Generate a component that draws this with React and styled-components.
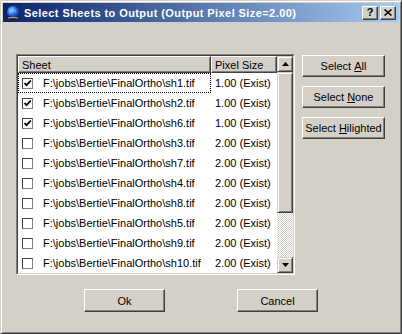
import React from 'react';
import styled, { createGlobalStyle } from 'styled-components';

const Global = createGlobalStyle`
  html, body { margin: 0; padding: 0; background: #D4D0C8; }
  body {
    width: 402px; height: 334px; overflow: hidden;
    font-family: "Liberation Sans", Arial, sans-serif;
    font-size: 11px; color: #000;
  }
`;

const Window = styled.div`
  box-sizing: border-box;
  width: 402px;
  height: 334px;
  background: #D4D0C8;
  border: 1px solid;
  border-color: #D4D0C8 #404040 #404040 #D4D0C8;
  box-shadow: inset 1px 1px #fff, inset -1px -1px #808080;
  padding: 2px;
  display: flex;
  flex-direction: column;
`;

const TitleBar = styled.div`
  height: 19px;
  flex: none;
  display: flex;
  align-items: center;
  background: linear-gradient(to right, #0A246A, #A6CAF0);
  padding: 0 3px 0 2px;
`;

const TitleIcon = styled.svg`
  width: 16px;
  height: 16px;
  flex: none;
  margin-right: 3px;
`;

const TitleText = styled.div`
  flex: 1;
  color: #fff;
  font-weight: bold;
  font-size: 11px;
  white-space: nowrap;
  letter-spacing: 0.42px;
`;

const CapButton = styled.div`
  box-sizing: border-box;
  width: 16px;
  height: 14px;
  margin-left: ${p => p.$gap || 0}px;
  background: #D4D0C8;
  border: 1px solid;
  border-color: #fff #404040 #404040 #fff;
  box-shadow: inset -1px -1px #808080;
  display: flex;
  align-items: center;
  justify-content: center;
  font-weight: bold;
  font-size: 11px;
  line-height: 1;
`;

const Body = styled.div`
  flex: 1;
  display: flex;
  flex-direction: column;
  padding: 32px 0 0 13px;
`;

const MainRow = styled.div`
  display: flex;
  align-items: flex-start;
  gap: 7px;
`;

const ListOuter = styled.div`
  width: 279px;
  height: 221px;
  box-sizing: border-box;
  border: 1px solid;
  border-color: #808080 #fff #fff #808080;
`;

const ListInner = styled.div`
  height: 100%;
  box-sizing: border-box;
  border: 1px solid;
  border-color: #404040 #D4D0C8 #D4D0C8 #404040;
  background: #fff;
  display: flex;
`;

const Table = styled.div`
  width: 259px;
  display: flex;
  flex-direction: column;
`;

const HeaderRow = styled.div`
  display: flex;
  height: 17px;
  flex: none;
`;

const HeaderCell = styled.div`
  box-sizing: border-box;
  width: ${p => p.$w}px;
  height: 17px;
  background: #D4D0C8;
  border: 1px solid;
  border-color: #fff #404040 #404040 #fff;
  box-shadow: inset -1px -1px #808080;
  padding-left: 3px;
  display: flex;
  align-items: center;
  white-space: nowrap;
`;

const Row = styled.div`
  display: flex;
  height: 20px;
  flex: none;
  background: #fff;
`;

const NameCell = styled.div`
  box-sizing: border-box;
  width: 193px;
  height: 20px;
  display: flex;
  align-items: center;
  padding-left: 4px;
  white-space: nowrap;
  overflow: hidden;
  outline: ${p => (p.$focus ? '1px dotted #000' : 'none')};
  outline-offset: -1px;
`;

const SizeCell = styled.div`
  box-sizing: border-box;
  width: 66px;
  height: 20px;
  display: flex;
  align-items: center;
  padding-left: 4px;
  white-space: nowrap;
`;

const CheckBox = styled.div`
  box-sizing: border-box;
  width: 11px;
  height: 11px;
  flex: none;
  margin-right: 10px;
  background: #fff;
  border: 1px solid;
  border-color: #404040 #808080 #808080 #404040;
  display: flex;
  align-items: center;
  justify-content: center;
`;

const Scrollbar = styled.div`
  width: 16px;
  display: flex;
  flex-direction: column;
`;

const ScrollButton = styled.div`
  box-sizing: border-box;
  width: 16px;
  height: ${p => p.$h}px;
  flex: none;
  background: #D4D0C8;
  border: 1px solid;
  border-color: #D4D0C8 #404040 #404040 #D4D0C8;
  box-shadow: inset 1px 1px #fff, inset -1px -1px #808080;
  display: flex;
  align-items: center;
  justify-content: center;
`;

const Track = styled.div`
  flex: 1;
  background: repeating-conic-gradient(#fff 0 25%, #D4D0C8 0 50%) 0 0 / 2px 2px;
`;

const SideButtons = styled.div`
  display: flex;
  flex-direction: column;
  gap: 9px;
  margin-top: 1px;
`;

const Button = styled.div`
  box-sizing: border-box;
  width: ${p => p.$w}px;
  height: ${p => p.$h}px;
  background: #D4D0C8;
  border: 1px solid;
  border-color: #fff #404040 #404040 #fff;
  box-shadow: inset -1px -1px #808080;
  display: flex;
  align-items: center;
  justify-content: center;
  white-space: nowrap;
  u { text-decoration: underline; text-underline-offset: 1px; }
`;

const BottomRow = styled.div`
  display: flex;
  justify-content: center;
  gap: 72px;
  margin-top: 14px;
  margin-left: -13px;
`;

const Arrow = ({ down }) => (
  <svg width="7" height="4" viewBox="0 0 7 4">
    {down ? <path d="M0 0H7L3.5 4Z" fill="#000" /> : <path d="M0 4H7L3.5 0Z" fill="#000" />}
  </svg>
);

const Check = () => (
  <svg width="9" height="9" viewBox="0 0 9 9">
    <path d="M1.5 4 L3.5 6.2 L7.8 1.5" fill="none" stroke="#000" strokeWidth="1.8" />
  </svg>
);

const rows = [
  ['sh1', '1.00', true],
  ['sh2', '1.00', true],
  ['sh6', '1.00', true],
  ['sh3', '2.00', false],
  ['sh7', '2.00', false],
  ['sh4', '2.00', false],
  ['sh8', '2.00', false],
  ['sh5', '2.00', false],
  ['sh9', '2.00', false],
  ['sh10', '2.00', false],
];

export default function App() {
  return (
    <>
      <Global />
      <Window>
        <TitleBar>
          <TitleIcon viewBox="0 0 16 16">
            <defs>
              <radialGradient id="g" cx="0.4" cy="0.35" r="0.7">
                <stop offset="0" stopColor="#9fd0ff" />
                <stop offset="0.5" stopColor="#2a6ee0" />
                <stop offset="1" stopColor="#0a2a8a" />
              </radialGradient>
            </defs>
            <circle cx="8" cy="7" r="6" fill="url(#g)" />
            <path d="M5 3.5 Q7 4 6.5 6 Q5 7 6 9 L4.5 8.5 Q3 6 5 3.5Z" fill="#5ec0ff" opacity="0.8" />
            <path d="M9 4 Q11 4.5 11.5 7 Q10 7 9.5 5.5Z" fill="#5ec0ff" opacity="0.8" />
            <path d="M1 12 Q4 10.5 8 12.5 Q12 11 15 12 L14 15 L2 15Z" fill="#222" />
            <path d="M3 13 Q8 12 13 13" stroke="#ddd" strokeWidth="0.8" fill="none" />
          </TitleIcon>
          <TitleText>Select Sheets to Output (Output Pixel Size=2.00)</TitleText>
          <CapButton>?</CapButton>
          <CapButton $gap={2}>
            <svg width="8" height="7" viewBox="0 0 8 7">
              <path d="M0.5 0.5 L7.5 6.5 M7.5 0.5 L0.5 6.5" stroke="#000" strokeWidth="1.5" />
            </svg>
          </CapButton>
        </TitleBar>
        <Body>
          <MainRow>
            <ListOuter>
              <ListInner>
                <Table>
                  <HeaderRow>
                    <HeaderCell $w={193}>Sheet</HeaderCell>
                    <HeaderCell $w={66}>Pixel Size</HeaderCell>
                  </HeaderRow>
                  {rows.map(([name, size, checked], i) => (
                    <Row key={name}>
                      <NameCell $focus={i === 0}>
                        <CheckBox>{checked && <Check />}</CheckBox>
                        F:\jobs\Bertie\FinalOrtho\{name}.tif
                      </NameCell>
                      <SizeCell>{size} (Exist)</SizeCell>
                    </Row>
                  ))}
                </Table>
                <Scrollbar>
                  <ScrollButton $h={16}><Arrow /></ScrollButton>
                  <ScrollButton $h={141} />
                  <Track />
                  <ScrollButton $h={16}><Arrow down /></ScrollButton>
                </Scrollbar>
              </ListInner>
            </ListOuter>
            <SideButtons>
              <Button $w={83} $h={22}>Select&nbsp;<u>A</u>ll</Button>
              <Button $w={83} $h={22}>Select&nbsp;<u>N</u>one</Button>
              <Button $w={83} $h={22}>Select&nbsp;<u>H</u>ilighted</Button>
            </SideButtons>
          </MainRow>
          <BottomRow>
            <Button $w={81} $h={23}>Ok</Button>
            <Button $w={81} $h={23}>Cancel</Button>
          </BottomRow>
        </Body>
      </Window>
    </>
  );
}
